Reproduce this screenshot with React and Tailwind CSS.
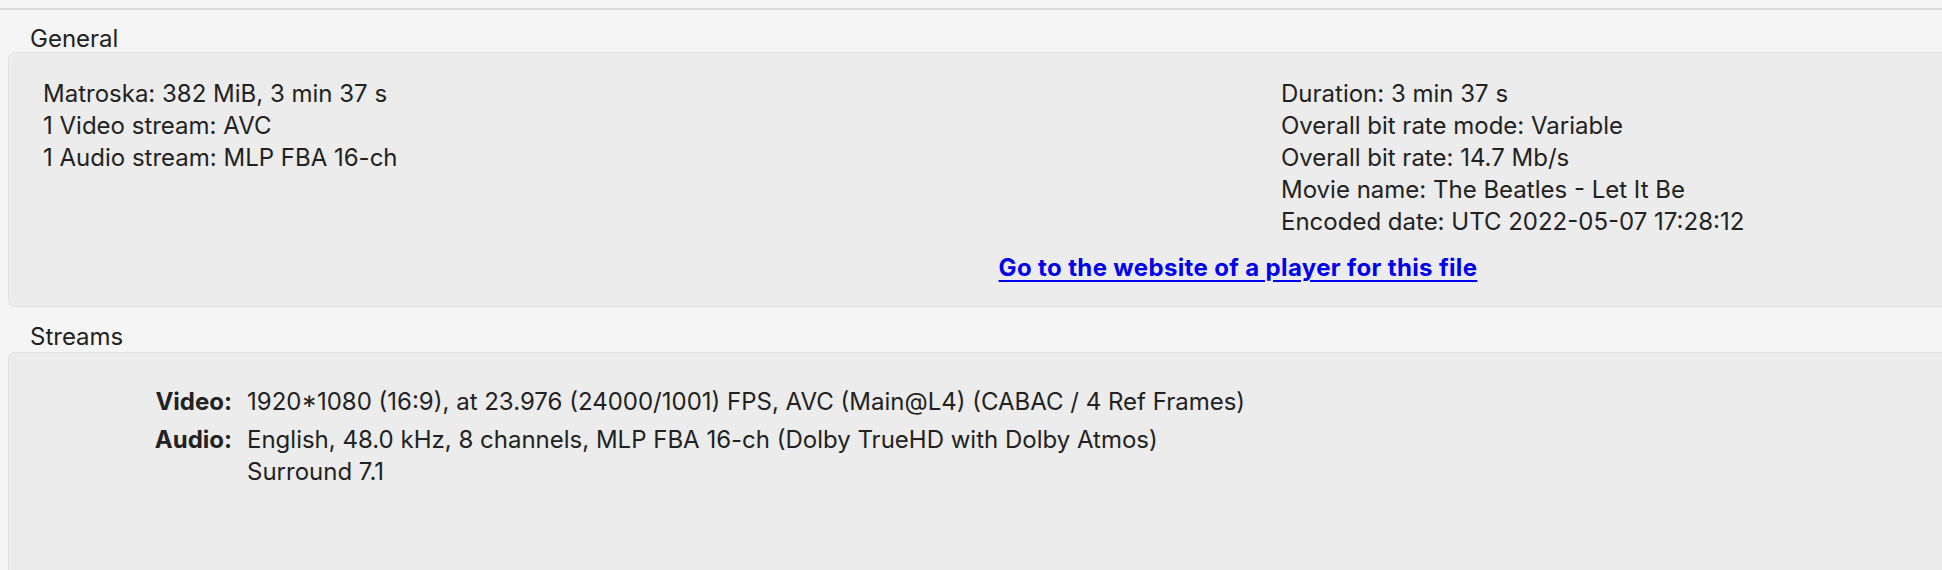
export default function App() {
  const left = [
    "Matroska: 382 MiB, 3 min 37 s",
    "1 Video stream: AVC",
    "1 Audio stream: MLP FBA 16-ch",
  ];
  const right = [
    "Duration: 3 min 37 s",
    "Overall bit rate mode: Variable",
    "Overall bit rate: 14.7 Mb/s",
    "Movie name: The Beatles - Let It Be",
    "Encoded date: UTC 2022-05-07 17:28:12",
  ];
  return (
    <div
      className="w-[1942px] h-[570px] overflow-hidden bg-[#f5f5f5] text-[#222] text-[24px] leading-[32px]"
      style={{ fontFamily: "Inter, 'Noto Sans', sans-serif" }}
    >
      <div className="h-[8px]" />
      <div className="h-[2px] bg-[#dadada]" />
      <div className="pl-[30px] pt-[13px] h-[42px] leading-[32px]">General</div>
      <div className="ml-[8px] w-[2460px] h-[255px] rounded-[7px] bg-[#ececec] border border-[#e2e2e2] flex flex-col">
        <div className="grid grid-cols-2 pt-[25px]">
          <div className="pl-[34px]">
            {left.map((t) => (
              <div key={t}>{t}</div>
            ))}
          </div>
          <div className="pl-[43px]">
            {right.map((t) => (
              <div key={t}>{t}</div>
            ))}
          </div>
        </div>
        <div className="mt-[14px] text-center">
          <a
            href="#"
            className="font-bold tracking-[0.015em] text-[#0000ee] underline underline-offset-[4px] decoration-[2px]"
          >
            Go to the website of a player for this file
          </a>
        </div>
      </div>
      <div className="pl-[30px] pt-[14px] h-[45px] leading-[32px]">Streams</div>
      <div className="ml-[8px] w-[2460px] h-[400px] rounded-[7px] bg-[#ececec] border border-[#e2e2e2] pt-[33px]">
        <div className="grid grid-cols-[223px_1fr] gap-x-[15px] gap-y-[6px]">
          <div className="font-bold text-right">Video:</div>
          <div>1920*1080 (16:9), at 23.976 (24000/1001) FPS, AVC (Main@L4) (CABAC / 4 Ref Frames)</div>
          <div className="font-bold text-right">Audio:</div>
          <div>
            <div>English, 48.0 kHz, 8 channels, MLP FBA 16-ch (Dolby TrueHD with Dolby Atmos)</div>
            <div>Surround 7.1</div>
          </div>
        </div>
      </div>
    </div>
  );
}
